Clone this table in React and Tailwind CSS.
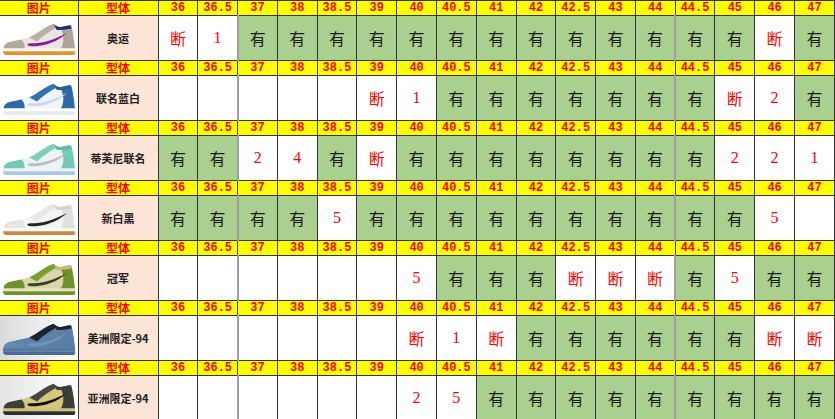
import React from "react";

const sizes = ["36", "36.5", "37", "38", "38.5", "39", "40", "40.5", "41", "42", "42.5", "43", "44", "44.5", "45", "46", "47"];

const Y = "有";
const D = "断";

const rows = [
  {
    name: "奥运",
    shoe: { base: "#e9e6e1", toe: "#b3aa9c", heel: "#aea596", eye: "#b9b0a2", swoosh: "#8c1f93", collar: "#1f2b7a", mid: "#f5f5f5", sole: "#e3952c" },
    cells: [D, "1", Y, Y, Y, Y, Y, Y, Y, Y, Y, Y, Y, Y, Y, D, Y],
  },
  {
    name: "联名蓝白",
    shoe: { base: "#f1f4f8", toe: "#2f69a5", heel: "#2f69a5", eye: "#3471ad", swoosh: "#c9d8ec", collar: "#2b5f98", mid: "#ffffff", sole: "#e6e9ee" },
    cells: ["", "", "", "", "", D, "1", Y, Y, Y, Y, Y, Y, Y, D, "2", Y],
  },
  {
    name: "蒂芙尼联名",
    shoe: { base: "#f1f3f3", toe: "#72c9b6", heel: "#72c9b6", eye: "#7ccfbc", swoosh: "#b9bfc4", collar: "#5fb9a5", mid: "#eef2f4", sole: "#a8c8e8" },
    cells: [Y, Y, "2", "4", Y, D, Y, Y, Y, Y, Y, Y, Y, Y, "2", "2", "1"],
  },
  {
    name: "新白黑",
    shoe: { base: "#f4f4f4", toe: "#e4e4e4", heel: "#e0e0e0", eye: "#e8e8e8", swoosh: "#262626", collar: "#d2d2d2", mid: "#fbfbfb", sole: "#c98a3e" },
    cells: [Y, Y, Y, Y, "5", Y, Y, Y, Y, Y, Y, Y, Y, Y, Y, "5", ""],
  },
  {
    name: "冠军",
    shoe: { base: "#dcd5ab", toe: "#6f922b", heel: "#6f922b", eye: "#7a9c33", swoosh: "#3a4420", collar: "#c9b978", mid: "#e6e1c2", sole: "#6f922b" },
    cells: ["", "", "", "", "", "", "5", Y, Y, Y, D, D, D, Y, "5", Y, Y],
  },
  {
    name: "美洲限定-94",
    shoe: { base: "#5c80a8", toe: "#6587b0", heel: "#5a7ea6", eye: "#1d2430", swoosh: "#7194be", collar: "#1d2430", mid: "#57799f", sole: "#4b6b90" },
    cells: ["", "", "", "", "", "", D, "1", D, Y, Y, Y, Y, Y, Y, D, D],
    bg: "bg-gradient-to-r from-[#d9dadc] to-white",
  },
  {
    name: "亚洲限定-94",
    shoe: { base: "#d6c779", toe: "#3b3f38", heel: "#3b3f38", eye: "#454a41", swoosh: "#141414", collar: "#3b3f38", mid: "#cfc27c", sole: "#2c2f29" },
    cells: ["", "", "", "", "", "", "2", "5", Y, Y, Y, Y, Y, Y, Y, Y, Y],
    bg: "bg-gradient-to-r from-[#e4e4e4] to-white",
  },
];

function Shoe({ c }) {
  return (
    <svg viewBox="0 0 80 45" className="w-[78px] h-[44px] block">
      <path d="M4 35 C3 30 6 27 12 26 L30 22 C38 18 44 13 50 10 L55 8 C57 10 60 12 64 11 C68 10 71 9 73 10 C75 16 76 26 77 34 Z" fill={c.base} />
      <path d="M4 35 C3 30 6 27 12 26 L22 24 C25 27 26 31 25 35 Z" fill={c.toe} />
      <path d="M30 22 C38 18 44 13 50 10 L55 8 L58 12 C52 15 44 20 38 26 Z" fill={c.eye} />
      <path d="M64 11 C68 10 71 9 73 10 C75 16 76 26 77 34 L62 34 C66 28 66 20 62 12 Z" fill={c.heel} />
      <path d="M55 8 C57 10 60 12 64 11 C68 10 71 9 73 10 L73 13 C69 13 64 15 58 14 Z" fill={c.collar} />
      <path d="M69 17 C60 26 46 31 32 31 C27 31 27 28 31 28 C44 28 56 24 69 17 Z" fill={c.swoosh} />
      <path d="M3 33 L77 33 L77 36 L3 36 Z" fill={c.mid} />
      <path d="M3 36 L77 36 Q78 40 74 40 L8 40 Q3 40 3 36 Z" fill={c.sole} />
    </svg>
  );
}

function Cell({ v, idx }) {
  const gray = idx === 2 || idx === 13 ? "border-l-2 border-l-[#a0a0a0]" : "";
  if (v === Y) {
    return (
      <td className={`border border-[#333] bg-[#a9d08e] text-center text-[16px] text-[#1a1a1a] ${gray}`}>
        {v}
      </td>
    );
  }
  if (v === D) {
    return (
      <td className={`border border-[#333] bg-white text-center text-[16px] text-[#ff0000] ${gray}`}>
        {v}
      </td>
    );
  }
  return (
    <td className={`border border-[#333] bg-white text-center text-[16px] text-[#ff0000] font-['Liberation_Serif',serif] ${gray}`}>
      {v}
    </td>
  );
}

export default function App() {
  return (
    <div className="w-[835px] h-[419px] overflow-hidden bg-white font-['Noto_Sans_CJK_SC',sans-serif]">
      <table className="w-[835px] table-fixed border-collapse">
        <colgroup>
          <col className="w-[78px]" />
          <col className="w-[80px]" />
          {sizes.map((s) => (
            <col key={s} />
          ))}
        </colgroup>
        <tbody>
          {rows.map((r) => (
            <React.Fragment key={r.name}>
              <tr className="h-[15px] bg-[#ffff00] text-[#ff0000] font-bold leading-none">
                <td className="border border-[#333] border-l-0 text-center text-[12px] p-0">图片</td>
                <td className="border border-[#333] text-center text-[12px] p-0">型体</td>
                {sizes.map((s) => (
                  <td key={s} className="border border-[#333] text-center text-[12px] p-0 font-['Liberation_Mono',monospace]">
                    {s}
                  </td>
                ))}
              </tr>
              <tr className="h-[44px]">
                <td className={`border border-[#333] border-l-0 p-0 ${r.bg || "bg-white"}`}>
                  <Shoe c={r.shoe} />
                </td>
                <td className="border border-[#333] bg-[#fce4d6] text-center text-[11px] font-semibold text-[#222] p-0">
                  {r.name}
                </td>
                {r.cells.map((v, i) => (
                  <Cell key={i} v={v} idx={i} />
                ))}
              </tr>
            </React.Fragment>
          ))}
        </tbody>
      </table>
    </div>
  );
}
